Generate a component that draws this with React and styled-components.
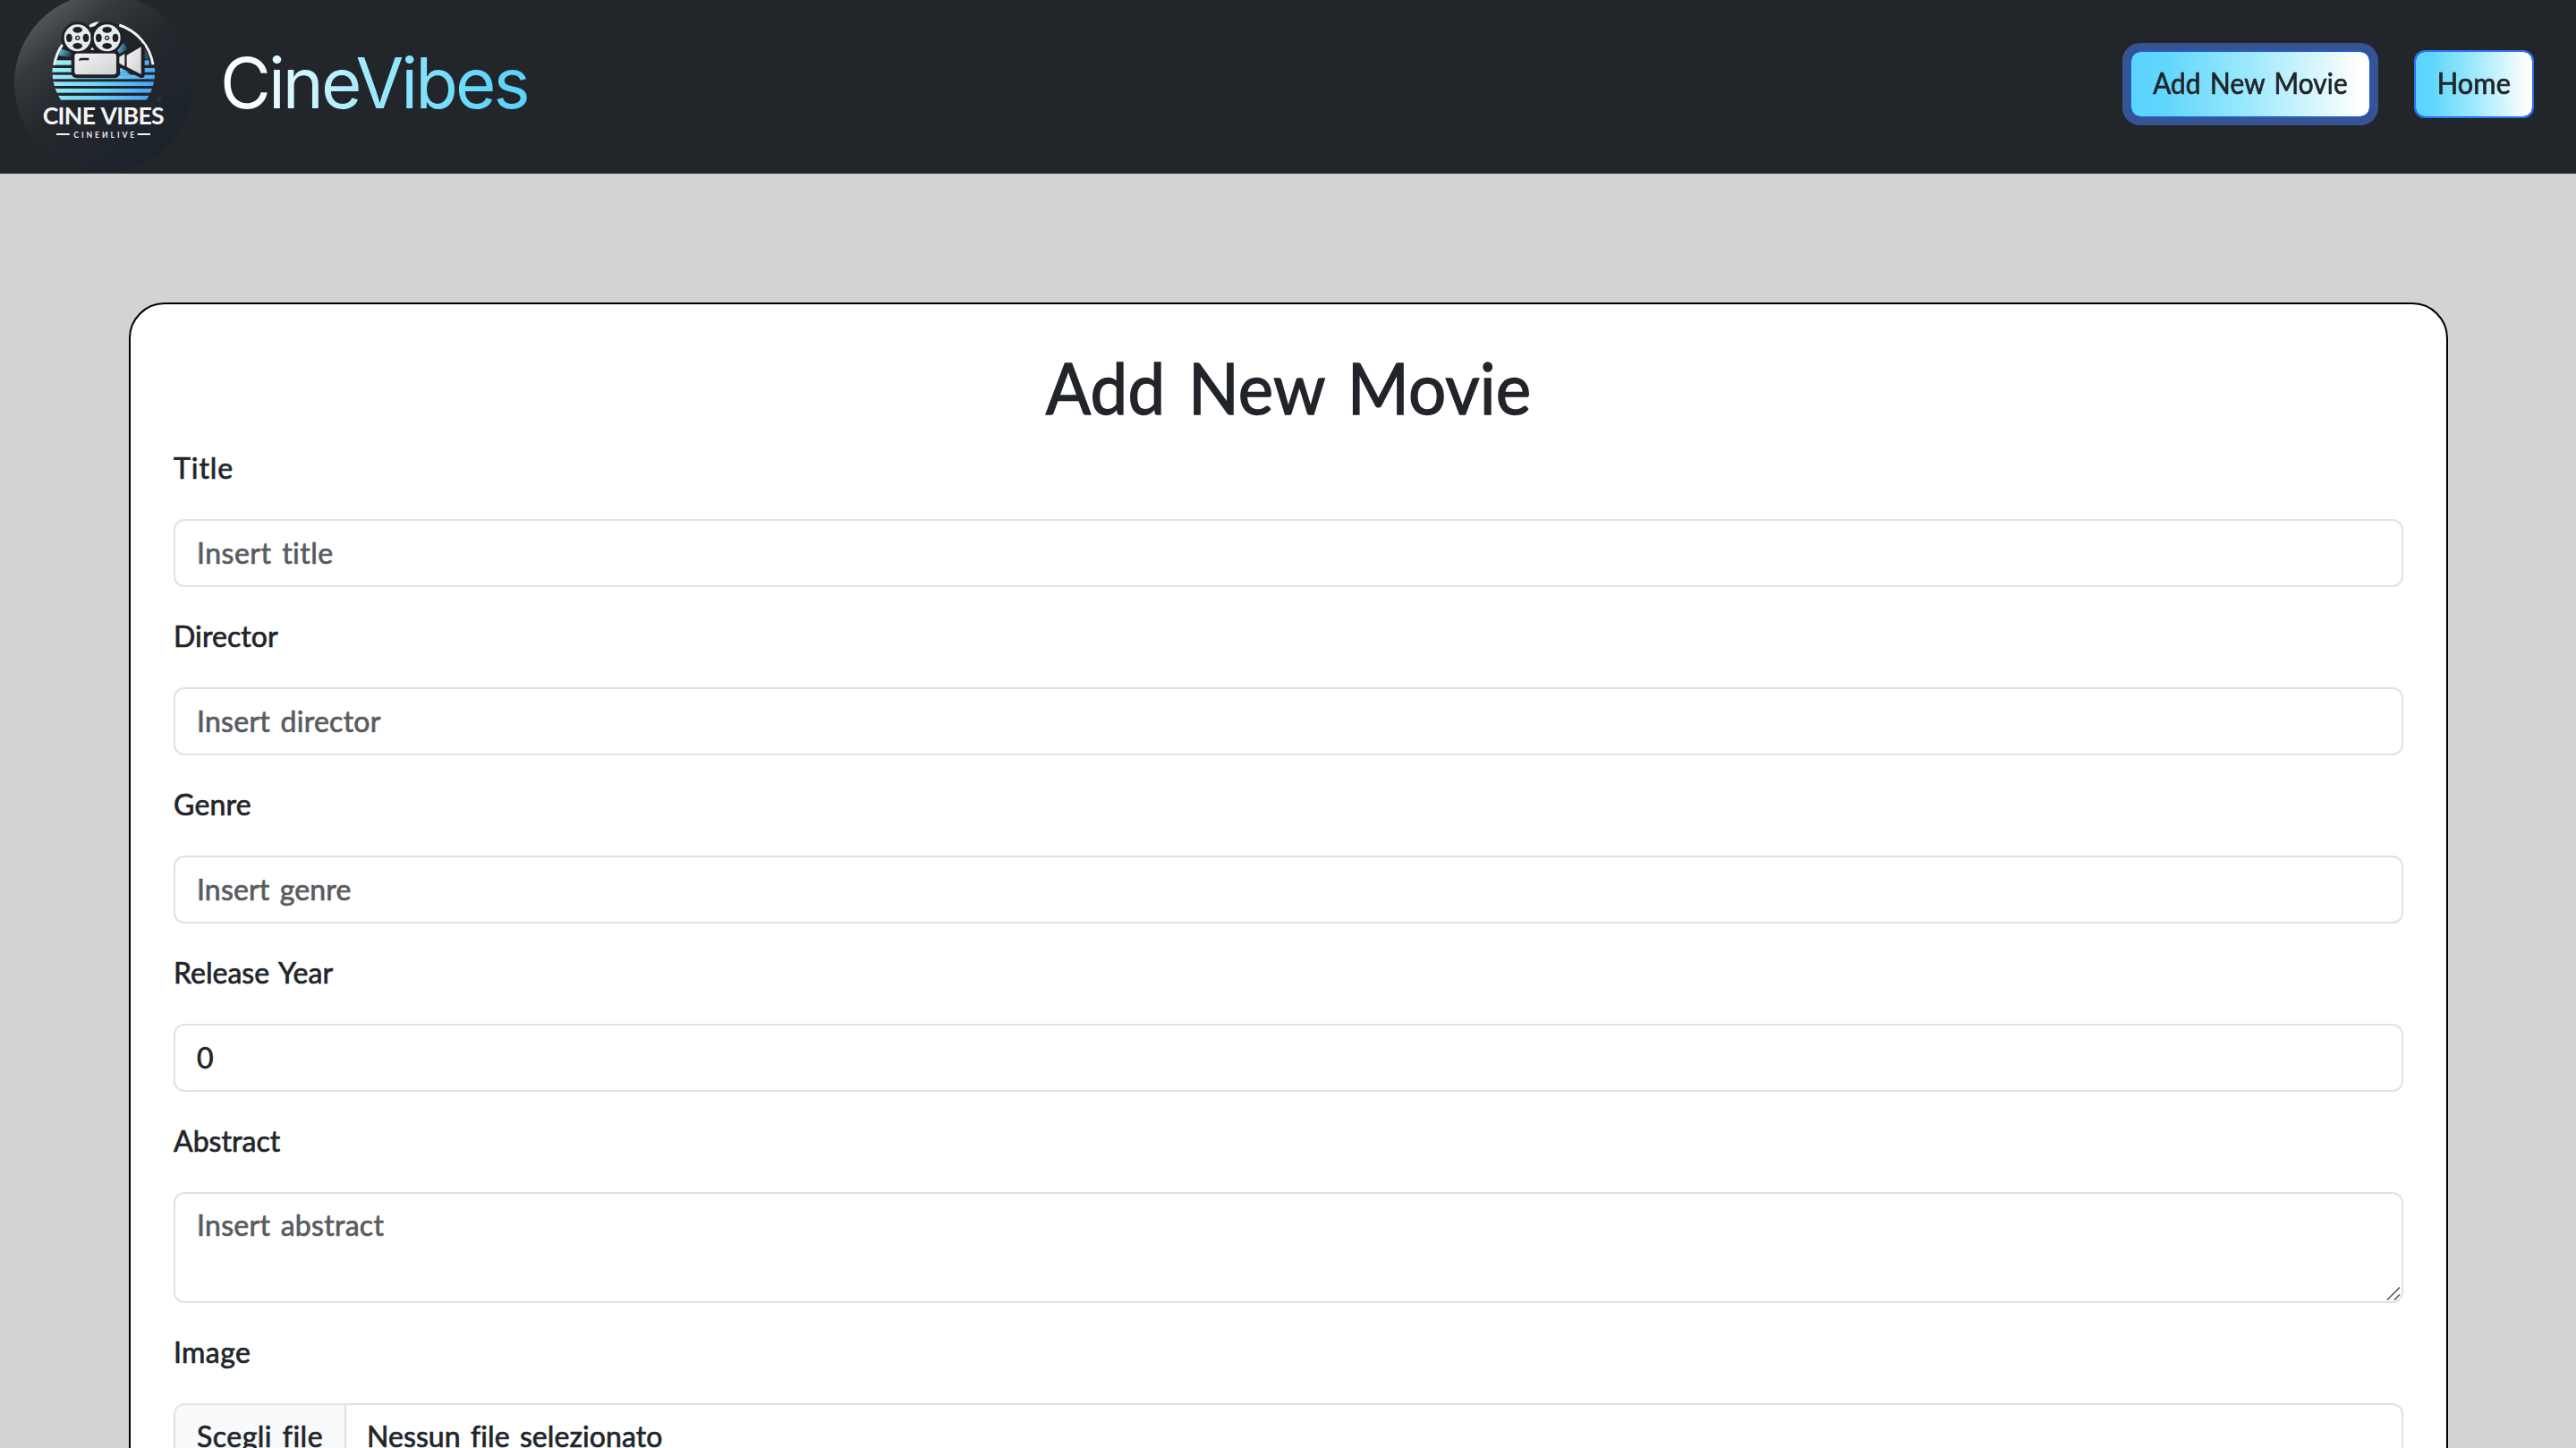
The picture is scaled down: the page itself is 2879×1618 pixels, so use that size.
import React from "react";
import styled, { createGlobalStyle } from "styled-components";

const ink = "#212529";
const line = "#dee2e6";

const GlobalStyle = createGlobalStyle`
  *, *::before, *::after { box-sizing: border-box; }
  body {
    margin: 0;
    height: 1618px;
    overflow: hidden;
    background: #d3d3d3;
    color: ${ink};
    font: 32px/48px Lato, "Open Sans", sans-serif;
    -webkit-text-stroke: 0.7px currentColor;
  }
`;

const Page = styled.div`
  height: 1618px;
  overflow: hidden;
`;

const Navbar = styled.header`
  display: flex;
  align-items: flex-start;
  height: 194px;
  padding: 0 47px 0 16px;
  overflow: hidden;
  background: #22262a;
`;

const LogoArt = styled.svg`
  flex: none;
  width: 200px;
  height: 200px;
  margin-top: -7px;
  -webkit-text-stroke: 0;
`;

const Brand = styled.div`
  margin: 45px auto 0 30px;
  font: 430 78px/95px Inter, sans-serif;
  letter-spacing: -3px;
  color: transparent;
  -webkit-text-stroke: 0;
  background: linear-gradient(to right, #fff 6%, #9de9fd 50%, #5fd6fb 88%, #5bd3fc);
  background-clip: text;
`;

const NavActions = styled.nav`
  display: flex;
  gap: 48px;
  margin-top: 56px;
`;

const NavButton = styled.button`
  display: flex;
  justify-content: center;
  width: ${(p) => p.$width}px;
  height: 76px;
  padding: 11px 0 13px;
  border: 2px solid ${(p) => (p.$focused ? "#265bc5" : "#2b70f5")};
  border-radius: 12px;
  outline: none;
  box-shadow: ${(p) => (p.$focused ? "0 0 0 8px #355491" : "none")};
  background: linear-gradient(to right, #5bd3fc, #5fd6fb 13%, #9de9fd 50%, #fff 96%) padding-box;
  color: ${ink};
  font: inherit;
  -webkit-text-stroke: inherit;
`;

const Squeezed = styled.span`
  display: block;
  white-space: nowrap;
  letter-spacing: 0.1px;
  word-spacing: ${(p) => p.$word || 3}px;
  transform: scaleX(${(p) => p.$scale});
`;

const Card = styled.main`
  width: 2592px;
  height: 1500px;
  margin: 144px 0 0 144px;
  padding: 44px 48px;
  border: 2px solid #000;
  border-radius: 40px;
  background: #fff;
`;

const Heading = styled.h1`
  margin: 0;
  height: 115px;
  display: flex;
  justify-content: center;
  font-size: 80px;
  font-weight: 400;
  line-height: 96px;
  -webkit-text-stroke-width: 1.4px;
`;

const Form = styled.form`
  display: grid;
  gap: 31px;
`;

const Field = styled.div`
  display: grid;
  gap: 34px;
`;

const Label = styled.label`
  height: 47px;
  line-height: 48px;
  letter-spacing: ${(p) => p.$track}px;
  word-spacing: 3px;
`;

const Control = styled.input`
  display: block;
  width: 100%;
  height: ${(p) => p.$height || 76}px;
  margin: 0;
  padding: 11px 24px 13px;
  border: 2px solid ${line};
  border-radius: 12px;
  outline: none;
  resize: none;
  background: #fff;
  color: ${ink};
  font: inherit;
  letter-spacing: ${(p) => p.$track || 0}px;
  word-spacing: 3px;
  -webkit-text-stroke: inherit;

  &::placeholder {
    color: #585c5f;
    opacity: 1;
    -webkit-text-stroke: 0.7px #585c5f;
  }
`;

const AreaWrap = styled.div`
  position: relative;
`;

const Grip = styled.svg`
  position: absolute;
  right: 3px;
  bottom: 2px;
  width: 16px;
  height: 17px;
`;

const FilePicker = styled.div`
  display: flex;
  height: 76px;
  overflow: hidden;
  border: 2px solid ${line};
  border-radius: 12px;
`;

const FileButton = styled.span`
  width: 191px;
  padding: 11px 0 0 24px;
  border-right: 2px solid ${line};
  background: #f8f9fa;
  letter-spacing: 0.5px;
  word-spacing: 3px;
`;

const FileName = styled.span`
  padding: 11px 0 0 23px;
  letter-spacing: 0.08px;
  word-spacing: 3px;
`;

function Reel({ x }) {
  return (
    <g transform={`translate(${x} 127)`}>
      <circle r="54" fill="#1d2127" />
      <circle r="45" fill="#e9eaea" />
      <g fill="#1d2127">
        <ellipse cy="-27" rx="16" ry="10" />
        <ellipse cy="27" rx="16" ry="10" />
        <ellipse cx="-28" rx="10" ry="14" />
        <ellipse cx="28" rx="10" ry="14" />
        <circle r="8" />
      </g>
      <circle r="4" fill="#e9eaea" />
    </g>
  );
}

function Logo() {
  return (
    <LogoArt viewBox="48 -21 600 600">
      <defs>
        <linearGradient id="disc" x1="0.12" y1="0.12" x2="0.75" y2="0.9">
          <stop offset="0" stopColor="#56595c" />
          <stop offset="0.22" stopColor="#35393d" />
          <stop offset="0.5" stopColor="#24282d" />
          <stop offset="1" stopColor="#1c232b" />
        </linearGradient>
        <linearGradient id="sea" gradientUnits="userSpaceOnUse" x1="180" y1="200" x2="500" y2="340">
          <stop offset="0" stopColor="#a5eefa" />
          <stop offset="0.5" stopColor="#6dd5f8" />
          <stop offset="1" stopColor="#489ff3" />
        </linearGradient>
        <linearGradient id="glow" x1="0" y1="0" x2="1" y2="0.3">
          <stop offset="0" stopColor="#62c9ee" />
          <stop offset="1" stopColor="#22303d" />
        </linearGradient>
        <linearGradient id="body" x1="0" y1="0" x2="1" y2="1">
          <stop offset="0" stopColor="#f4f4f4" />
          <stop offset="1" stopColor="#d0d1d3" />
        </linearGradient>
        <clipPath id="round"><circle cx="347.5" cy="240" r="172" /></clipPath>
      </defs>
      <circle cx="348" cy="279" r="300" fill="url(#disc)" />
      <circle cx="348" cy="240" r="164" fill="#1f242a" />
      <path d="M205 164 L250 178 L240 192 L196 186Z" fill="url(#glow)" />
      <path d="M395 160 L414 145 L430 165 L410 182 L395 178Z" fill="url(#glow)" />
      <path d="M482 160 Q496 180 498 200 L484 195Z" fill="#2a5670" />
      <g fill="none" stroke="#f2f3f3" strokeWidth="9">
        <path d="M182 218 A167 167 0 0 1 209 150" />
        <path d="M400 84 A167 167 0 0 1 513 217" />
      </g>
      <path d="M298 85 Q315 73 333 73 L318 87 L302 92Z" fill="#f2f3f3" />
      <g clipPath="url(#round)" fill="url(#sea)">
        <rect x="187" y="202" width="313" height="16" />
        <rect x="170" y="228" width="356" height="14" />
        <rect x="170" y="251" width="356" height="14" />
        <rect x="170" y="274" width="356" height="14" />
        <rect x="170" y="297" width="356" height="14" />
        <rect x="170" y="321" width="356" height="14" />
      </g>
      <path d="M394 184 L417 172 L470 148 Q485 144 485 156 V252 Q484 264 470 260 L418 235 L394 222Z" fill="#1d2127" />
      <rect x="239" y="168" width="163" height="94" rx="18" fill="#1d2127" />
      <Reel x={260} />
      <Reel x={359} />
      <path d="M303 167 L309 158 L316 167Z" fill="#f2f3f3" />
      <rect x="250" y="179" width="140" height="71" rx="9" fill="url(#body)" />
      <path d="M265 205 V199 Q266 194 272 194 H298 V202 H272Z" fill="#1d2127" />
      <path d="M400 191 L418 180 V222 L400 212Z" fill="#e6e7e8" />
      <path d="M425 185 L473 157 V249 L425 224Z" fill="url(#body)" />
      <path d="M403 243 H425 L440 251 H403Z" fill="url(#sea)" />
      <circle cx="534" cy="331" r="5" fill="none" stroke="#4b5157" strokeWidth="2" />
      <text x="143" y="418" fontFamily="Lato" fontWeight="700" fontSize="80" fill="#f4f5f5" textLength="408" wordSpacing="4">
        CINE VIBES
      </text>
      <text x="247" y="461" fontFamily="Lato" fontWeight="700" fontSize="26" fill="#eceded" textLength="204">
        CINEИLIVE
      </text>
      <path d="M189 450 H233 M461 450 H504" stroke="#f2f3f3" strokeWidth="6" />
    </LogoArt>
  );
}

const fields = [
  { name: "Title", track: 0.95, hint: "Insert title", hintTrack: 0.5 },
  { name: "Director", track: 0.09, hint: "Insert director", hintTrack: 0.27 },
  { name: "Genre", track: 0.2, hint: "Insert genre", hintTrack: 0.15 },
  { name: "Release Year", track: 0.02, value: "0" },
];

export default function App() {
  return (
    <Page>
      <GlobalStyle />
      <Navbar>
        <Logo />
        <Brand>CineVibes</Brand>
        <NavActions>
          <NavButton $width={270} $focused>
            <Squeezed $scale={0.93}>Add New Movie</Squeezed>
          </NavButton>
          <NavButton $width={134}>
            <Squeezed $scale={0.96}>Home</Squeezed>
          </NavButton>
        </NavActions>
      </Navbar>
      <Card>
        <Heading>
          <Squeezed $scale={0.932} $word={7}>Add New Movie</Squeezed>
        </Heading>
        <Form>
          {fields.map((f) => (
            <Field key={f.name}>
              <Label $track={f.track}>{f.name}</Label>
              <Control placeholder={f.hint} defaultValue={f.value} $track={f.hintTrack} />
            </Field>
          ))}
          <Field>
            <Label $track={0.04}>Abstract</Label>
            <AreaWrap>
              <Control as="textarea" placeholder="Insert abstract" $track={0.29} $height={124} />
              <Grip viewBox="0 0 16 17" stroke="#555" strokeWidth="1.6">
                <path d="M1 15.5 L15 1.5 M9 15.5 L15 9.5" />
              </Grip>
            </AreaWrap>
          </Field>
          <Field>
            <Label $track={0.4}>Image</Label>
            <FilePicker>
              <FileButton>Scegli file</FileButton>
              <FileName>Nessun file selezionato</FileName>
            </FilePicker>
          </Field>
        </Form>
      </Card>
    </Page>
  );
}
